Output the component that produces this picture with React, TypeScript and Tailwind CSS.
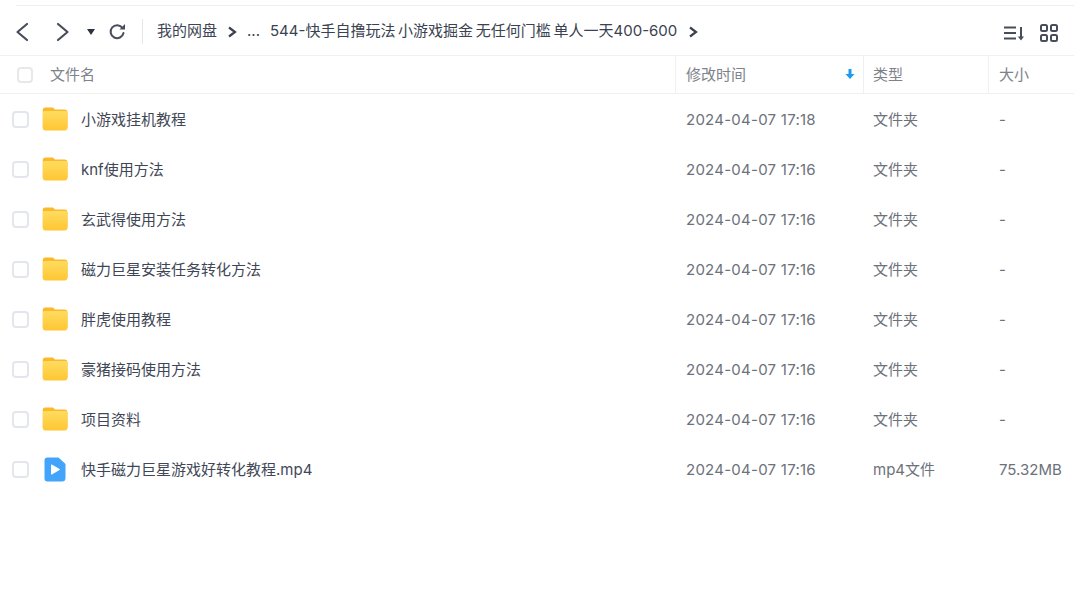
const FONT = "font-['Inter','Noto_Sans_CJK_SC',sans-serif]";

interface FileRow {
  name: string;
  time: string;
  type: string;
  size: string;
  video?: boolean;
}

const rows: FileRow[] = [
  { name: "小游戏挂机教程", time: "2024-04-07 17:18", type: "文件夹", size: "-" },
  { name: "knf使用方法", time: "2024-04-07 17:16", type: "文件夹", size: "-" },
  { name: "玄武得使用方法", time: "2024-04-07 17:16", type: "文件夹", size: "-" },
  { name: "磁力巨星安装任务转化方法", time: "2024-04-07 17:16", type: "文件夹", size: "-" },
  { name: "胖虎使用教程", time: "2024-04-07 17:16", type: "文件夹", size: "-" },
  { name: "豪猪接码使用方法", time: "2024-04-07 17:16", type: "文件夹", size: "-" },
  { name: "项目资料", time: "2024-04-07 17:16", type: "文件夹", size: "-" },
  { name: "快手磁力巨星游戏好转化教程.mp4", time: "2024-04-07 17:16", type: "mp4文件", size: "75.32MB", video: true },
];

function Folder({ id }: { id: string }) {
  return (
    <svg width="26" height="24" viewBox="0 0 26 24">
      <defs>
        <linearGradient id={id} x1="0" y1="0" x2="0" y2="1">
          <stop offset="0" stopColor="#ffdc60" />
          <stop offset="1" stopColor="#ffc633" />
        </linearGradient>
      </defs>
      <path d="M.8 3a2.500 2.500 0 0 1 2.500-2.500h6.500c1.500 0 2 .5 3 2h9.700a3 3 0 0 1 3 3v14a3 3 0 0 1-3 3h-19a2.700 2.700 0 0 1-2.700-2.700z" fill="#fbb829" />
      <path d="M.8 6a2 2 0 0 1 2-2h20.700a2 2 0 0 1 2 2v14.500a3 3 0 0 1-3 3h-19a2.700 2.700 0 0 1-2.700-2.700z" fill={`url(#${id})`} />
    </svg>
  );
}

function VideoFile() {
  return (
    <svg width="22" height="25" viewBox="0 0 22 25">
      <path d="M3.500 0.500h11L21.500 7v14a3.500 3.500 0 0 1-3.500 3.500H3.500A3 3 0 0 1 .5 21.500v-18a3 3 0 0 1 3-3z" fill="#42a5fb" />
      <path d="M7.500 7.800v9.400l8-4.700z" fill="#fff" strokeLinejoin="round" stroke="#fff" />
    </svg>
  );
}

function Checkbox({ className }: { className: string }) {
  return <span className={`block rounded-[4px] border-2 bg-white ${className}`} />;
}

function Chevron({ className }: { className: string }) {
  return (
    <svg className={className} width="10" height="12" viewBox="0 0 10 12" fill="none" stroke="#3a4250" strokeWidth="2.200">
      <path d="M2 1.500 8 6l-6 4.500" />
    </svg>
  );
}

export default function App() {
  return (
    <div className={`h-[601px] w-[1074px] overflow-hidden bg-white pt-[5px] text-[15px] text-[#424e61] ${FONT}`}>
      <div className="ml-4 h-px bg-[#eeeeee]" />
      <div className="flex h-[50px] items-center border-b border-[#f0f0f0] pt-[2px] text-[#3a4250]">
        <svg className="ml-[14px]" width="16" height="20" viewBox="0 0 16 20" fill="none" stroke="#474e5b" strokeWidth="2.200" strokeLinecap="round" strokeLinejoin="round">
          <path d="M13 2 3.500 10 13 18" />
        </svg>
        <svg className="ml-[25px]" width="16" height="20" viewBox="0 0 16 20" fill="none" stroke="#474e5b" strokeWidth="2.200" strokeLinecap="round" strokeLinejoin="round">
          <path d="M3 2l9.500 8L3 18" />
        </svg>
        <svg className="ml-[15px]" width="10" height="8" viewBox="0 0 10 8">
          <path d="M1 1h8L5 7z" fill="#2c3340" />
        </svg>
        <svg className="ml-[12px]" width="18" height="18" viewBox="0 0 18 18" fill="none">
          <path d="M14.500 5A6.500 6.500 0 1 0 15.500 10" stroke="#474e5b" strokeWidth="2" strokeLinecap="round" />
          <path d="M11.500 6.500h5.500V1z" fill="#474e5b" />
        </svg>
        <span className="ml-[16px] h-[25px] w-px bg-[#e6e6e6]" />
        <span className="ml-[14px] text-[#3d4554]">我的网盘</span>
        <Chevron className="ml-[10px]" />
        <span className="ml-[10px]">...</span>
        <span className="ml-[10px] [word-spacing:-1.5px]">544-快手自撸玩法 小游戏掘金 无任何门槛 单人一天400-600</span>
        <Chevron className="ml-[11px]" />
        <svg className="mt-[3px] ml-auto" width="22" height="18" viewBox="0 0 22 18" fill="none" stroke="#474e5b" strokeWidth="2">
          <path d="M1 3.500h12M1 9h12M1 14.500h12" />
          <path d="M18 3v11" />
          <path d="M14.800 12.500H21L18 16.500z" fill="#474e5b" strokeWidth="0" />
        </svg>
        <svg className="mt-[3px] mr-[16px] ml-[15px]" width="18" height="18" viewBox="0 0 18 18" fill="none" stroke="#474e5b" strokeWidth="2">
          <rect x="1" y="1" width="6" height="6" rx="1.500" />
          <rect x="11" y="1" width="6" height="6" rx="1.500" />
          <rect x="1" y="11" width="6" height="6" rx="1.500" />
          <rect x="11" y="11" width="6" height="6" rx="1.500" />
        </svg>
      </div>

      <div className="flex h-[38px] items-stretch border-b border-[#f0f0f0] text-[#7d828b]">
        <div className="flex w-[676px] items-center border-r border-[#f0f0f0] pl-[17px]">
          <Checkbox className="h-4 w-4 border-[#e8e8ea]" />
          <span className="ml-[17px] pt-[2px]">文件名</span>
        </div>
        <div className="flex w-[188px] items-center justify-between border-r border-[#f0f0f0] pt-[2px] pr-[8px] pl-[10px]">
          <span>修改时间</span>
          <svg className="mb-[3px]" width="10" height="12" viewBox="0 0 10 12">
            <path d="M3.500 1h3v5h3L5 11 .5 6h3z" fill="#1c9bf0" />
          </svg>
        </div>
        <div className="flex w-[125px] items-center border-r border-[#f0f0f0] pt-[2px] pl-[9px]">类型</div>
        <div className="flex flex-1 items-center pt-[2px] pl-[10px]">大小</div>
      </div>

      {rows.map((row, i) => (
        <div key={row.name} className="flex h-[50px] items-center">
          <div className="flex w-[676px] items-center pl-[12px]">
            <Checkbox className="h-[17px] w-[17px] border-[#e3e6ec]" />
            <div className="ml-[13px] flex w-[26px] justify-center">
              {row.video ? <VideoFile /> : <Folder id={`folder-${i}`} />}
            </div>
            <span className="ml-[13px] pt-[2px] text-[#3f4756]">{row.name}</span>
          </div>
          <div className="w-[187px] pt-[2px] pl-[10px] tracking-[0.25px] text-[#6c717a]">{row.time}</div>
          <div className="w-[126px] pt-[2px] pl-[10px] text-[#6c717a]">{row.type}</div>
          <div className="flex-1 pt-[2px] pl-[10px] text-[#6c717a]">{row.size}</div>
        </div>
      ))}
    </div>
  );
}
